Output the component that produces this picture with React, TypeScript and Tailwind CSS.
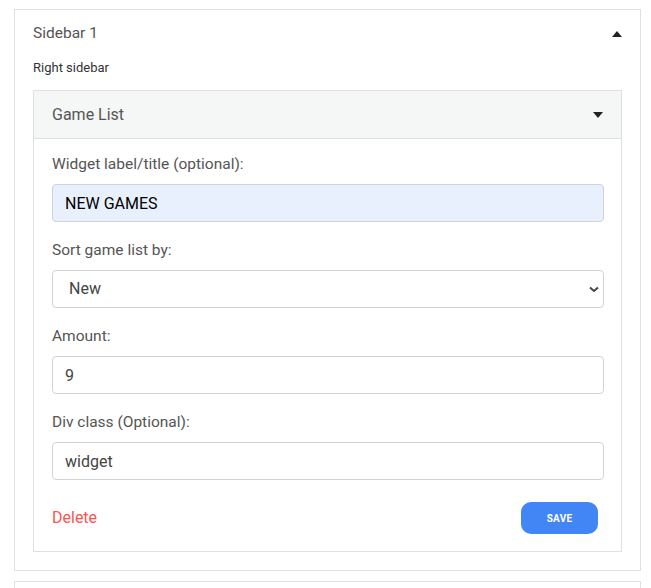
import React from "react";

const fields = [
  { label: "Widget label/title (optional):", value: "NEW GAMES", autofill: true },
];

const Caret = ({ up }: { up?: boolean }) => (
  <svg width="10" height="6" viewBox="0 0 10 6" className="text-[#222]">
    <path d={up ? "M0 6 L5 0 L10 6 Z" : "M0 0 L10 0 L5 6 Z"} fill="currentColor" />
  </svg>
);

const Label = ({ children }: { children: React.ReactNode }) => (
  <label className="block text-[15.5px] leading-6 text-[#555] mb-2">{children}</label>
);

const inputCls =
  "block w-full h-[38px] rounded border border-[#ced4da] px-3 text-[16px] text-[#444] outline-none";

export default function App() {
  return (
    <div
      className="bg-white pt-[9px] pl-[14px] h-[588px] overflow-hidden"
      style={{ fontFamily: "Roboto, 'Liberation Sans', sans-serif" }}
    >
      <div className="w-[627px] border border-[#e0e0e0] px-[18px] pt-[12px] pb-[18px]">
        <div className="flex items-center justify-between h-6">
          <span className="text-[15.5px] text-[#555]">Sidebar 1</span>
          <Caret up />
        </div>
        <div className="mt-3 text-[13px] leading-5 text-[#333]">Right sidebar</div>

        <div className="mt-3 border border-[#e0e0e0]">
          <div className="flex items-center justify-between h-12 px-[18px] bg-[#f5f6f6] border-b border-[#e0e0e0]">
            <span className="text-[16px] text-[#555]">Game List</span>
            <Caret />
          </div>

          <div className="pl-[18px] pr-[17px] pt-[13px] pb-[17px]">
            {fields.map((f) => (
              <div key={f.label}>
                <Label>{f.label}</Label>
                <input
                  defaultValue={f.value}
                  className={inputCls + " bg-[#e8f0fe] text-black"}
                />
              </div>
            ))}

            <div className="mt-4">
              <Label>Sort game list by:</Label>
              <div className="relative">
                <select
                  defaultValue="new"
                  className="block w-full h-[38px] appearance-none rounded border border-[#ced4da] bg-white pl-4 text-[16px] text-[#444] outline-none"
                >
                  <option value="new">New</option>
                  <option value="popular">Popular</option>
                </select>
                <svg
                  width="10"
                  height="7"
                  viewBox="0 0 10 7"
                  className="absolute right-[5px] top-[16px] pointer-events-none"
                >
                  <path d="M1 1.5 L5 5 L9 1.5" fill="none" stroke="#444" strokeWidth="2" />
                </svg>
              </div>
            </div>

            <div className="mt-4">
              <Label>Amount:</Label>
              <input defaultValue="9" className={inputCls + " bg-white"} />
            </div>

            <div className="mt-4">
              <Label>Div class (Optional):</Label>
              <input defaultValue="widget" className={inputCls + " bg-white"} />
            </div>

            <div className="mt-[22px] flex items-center justify-between">
              <span className="text-[16px] text-[#ff5252] leading-6">Delete</span>
              <button className="mr-[6px] h-8 w-[77px] rounded-[10px] bg-[#4285f4] text-[10px] font-bold text-white tracking-wide">
                SAVE
              </button>
            </div>
          </div>
        </div>
      </div>

      <div className="mt-[10px] w-[627px] h-10 border border-[#e0e0e0]" />
    </div>
  );
}
